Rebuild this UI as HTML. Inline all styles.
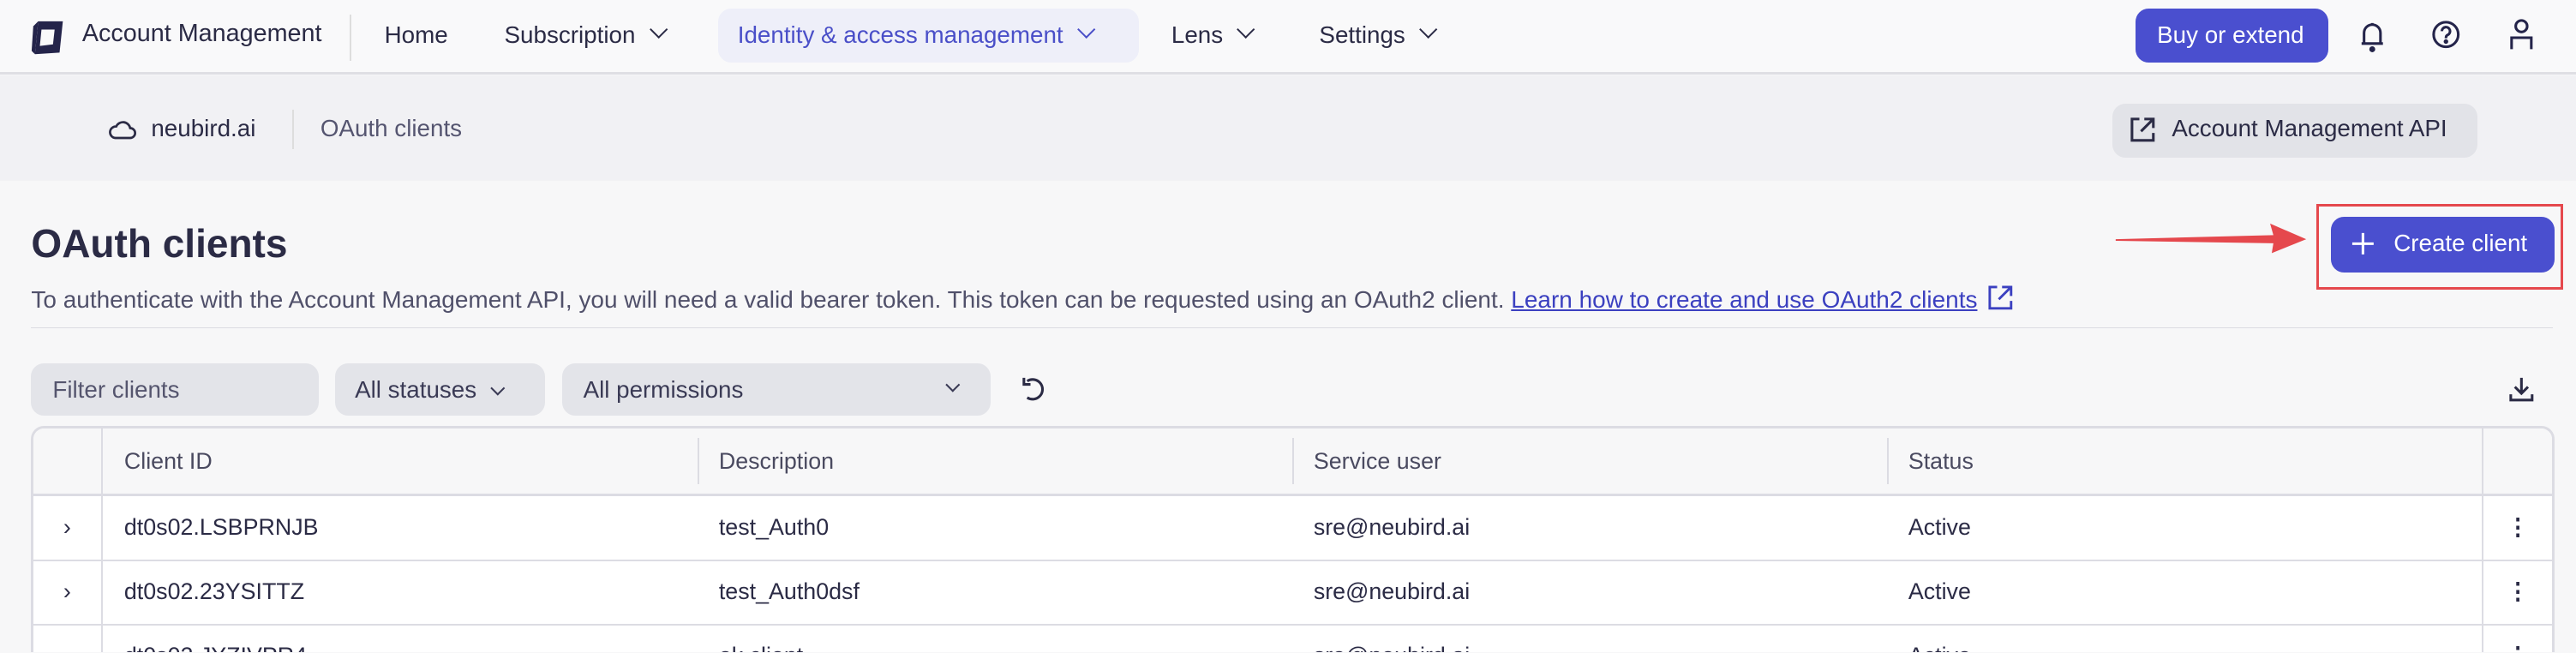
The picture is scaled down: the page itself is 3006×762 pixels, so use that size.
<!DOCTYPE html>
<html><head><meta charset="utf-8"><style>
html,body{margin:0;padding:0;width:3006px;height:762px;overflow:hidden;background:#f7f7f8}
#w{position:relative;width:1568px;height:397px;overflow:hidden;zoom:1.91709;font-family:"Liberation Sans",sans-serif;color:#2b2b45;font-size:14px}
.a{position:absolute;white-space:nowrap}
.nav{position:absolute;left:0;top:0;width:1568px;height:44px;background:#f9f9fa;border-bottom:2px solid #dfdfe4}
.bc{position:absolute;left:0;top:46px;width:1568px;height:64px;background:#f1f1f4}
.pill{position:absolute;border-radius:8px}
.ch{display:inline-block;width:7px;height:7px;border-right:1.5px solid currentColor;border-bottom:1.5px solid currentColor;transform:rotate(45deg);margin-left:10px;position:relative;top:-4px}
.th{position:absolute;top:0;height:40px;line-height:40px;color:#4a4a60}
.td{position:absolute;line-height:39px}
</style></head><body><div id="w">
<div class="nav"></div>
<svg class="a" style="left:18px;top:12px" width="21" height="22" viewBox="0 0 21 22"><path d="M5 1 L20 1 L18 20 L3 21 Z" fill="#24244a"/><path d="M7 6 L15 6 L14 15 L6 16 Z" fill="#f9f9fa"/><path d="M5 1 L2 4 L1 19 L3 21 Z" fill="#24244a"/></svg>
<div class="a" style="left:50px;top:12px;font-size:15px">Account Management</div>
<div class="a" style="left:213px;top:9px;width:1px;height:28px;background:#ddd"></div>
<div class="a" style="left:234px;top:13px;font-size:14.5px">Home</div>
<div class="a" style="left:307px;top:13px;font-size:14.5px">Subscription<span class="ch"></span></div>
<div class="pill" style="left:437px;top:5px;width:256px;height:33px;background:#eeeff9"></div>
<div class="a" style="left:449px;top:13px;font-size:14.5px;color:#4a4fc8">Identity &amp; access management<span class="ch"></span></div>
<div class="a" style="left:713px;top:13px;font-size:14.5px">Lens<span class="ch"></span></div>
<div class="a" style="left:803px;top:13px;font-size:14.5px">Settings<span class="ch"></span></div>
<div class="pill" style="left:1300px;top:5px;width:117px;height:33px;background:#4a4fcf"></div>
<div class="a" style="left:1313px;top:13px;font-size:14.5px;color:#fff">Buy or extend</div>
<svg class="a" style="left:1435px;top:12px" width="18" height="20" viewBox="0 0 18 20" fill="none" stroke="#24244a" stroke-width="1.6"><path d="M4 14 V8 a5 5 0 0 1 10 0 V14 M2.5 14.5 H15.5 M9 2 V3.5"/><circle cx="9" cy="18" r="1" fill="#24244a"/></svg>
<svg class="a" style="left:1480px;top:12px" width="18" height="18" viewBox="0 0 18 18" fill="none" stroke="#24244a" stroke-width="1.6"><circle cx="9" cy="9" r="7.5"/><path d="M6.5 7 a2.5 2.5 0 1 1 3.5 2.3 c-1 .4-1 1.2-1 2"/><circle cx="9" cy="13.3" r=".6" fill="#24244a"/></svg>
<svg class="a" style="left:1527px;top:11px" width="16" height="20" viewBox="0 0 16 20" fill="none" stroke="#24244a" stroke-width="1.6"><circle cx="8" cy="5" r="3.5"/><path d="M2 19 V12 H14 V19"/></svg>
<div class="bc"></div>
<svg class="a" style="left:66px;top:72px" width="17" height="13" viewBox="0 0 17 13" fill="none" stroke="#2b2b45" stroke-width="1.4"><path d="M4 12 H13 a3 3 0 0 0 0-6 a4.5 4.5 0 0 0-8.5-1 A3.5 3.5 0 0 0 4 12Z"/></svg>
<div class="a" style="left:92px;top:70px;font-size:14.5px">neubird.ai</div>
<div class="a" style="left:178px;top:67px;width:1px;height:24px;background:#ddd"></div>
<div class="a" style="left:195px;top:70px;font-size:14.5px;color:#555570">OAuth clients</div>
<div class="pill" style="left:1286px;top:63px;width:222px;height:33px;background:#e2e3e8"></div>
<svg class="a" style="left:1296px;top:71px" width="16" height="16" viewBox="0 0 16 16" fill="none" stroke="#2b2b45" stroke-width="1.6"><path d="M6 1.5 H1.5 V14.5 H14.5 V10 M9 1.5 H14.5 V7 M14.5 1.5 L7 9"/></svg>
<div class="a" style="left:1322px;top:70px;font-size:14.5px">Account Management API</div>
<div class="a" style="left:19px;top:134px;font-size:24px;font-weight:bold">OAuth clients</div>
<div class="a" style="left:19px;top:173px;font-size:14.6px;color:#50506a">To authenticate with the Account Management API, you will need a valid bearer token. This token can be requested using an OAuth2 client. <span style="color:#3b40c0;text-decoration:underline">Learn how to create and use OAuth2 clients</span> <svg width="16" height="16" viewBox="0 0 16 16" fill="none" stroke="#3b40c0" stroke-width="1.5" style="vertical-align:-2px;margin-left:2px"><path d="M6 1.5 H1.5 V14.5 H14.5 V10 M9 1.5 H14.5 V7 M14.5 1.5 L7 9"/></svg></div>
<div class="a" style="left:19px;top:199px;width:1535px;height:1px;background:#dcdce2"></div>
<svg class="a" style="left:1286px;top:135px" width="120" height="22" viewBox="0 0 120 22"><path d="M2 10.5 L98 8 L96 1 L118 10.5 L97 19 L98 13 L2 11.5Z" fill="#e5484d"/></svg>
<div class="a" style="left:1410px;top:124px;width:147px;height:49px;border:2px solid #e5484d"></div>
<div class="pill" style="left:1419px;top:132px;width:136px;height:34px;background:#4a4fcf"></div>
<svg class="a" style="left:1431px;top:141px" width="15" height="15" viewBox="0 0 15 15" stroke="#fff" stroke-width="1.6"><path d="M7.5 1 V14 M1 7.5 H14"/></svg>
<div class="a" style="left:1457px;top:140px;font-size:14.5px;color:#fff">Create client</div>
<div class="pill" style="left:19px;top:221px;width:175px;height:32px;background:#e3e4e9"></div>
<div class="a" style="left:32px;top:229px;font-size:14.5px;color:#55556e">Filter clients</div>
<div class="pill" style="left:204px;top:221px;width:128px;height:32px;background:#e3e4e9"></div>
<div class="a" style="left:216px;top:229px;font-size:14.5px;color:#3a3a55">All statuses<span class="ch" style="width:5px;height:5px;top:-3px"></span></div>
<div class="pill" style="left:342px;top:221px;width:261px;height:32px;background:#e3e4e9"></div>
<div class="a" style="left:355px;top:229px;font-size:14.5px;color:#3a3a55">All permissions</div>
<div class="a" style="left:577px;top:231px;width:5px;height:5px;border-right:1.5px solid #3a3a55;border-bottom:1.5px solid #3a3a55;transform:rotate(45deg)"></div>
<svg class="a" style="left:621px;top:229px" width="16" height="16" viewBox="0 0 16 16" fill="none" stroke="#2b2b45" stroke-width="1.6"><path d="M4 3 A6 6 0 1 1 4 13 M2 1 V5 H6"/></svg>
<svg class="a" style="left:1527px;top:229px" width="16" height="16" viewBox="0 0 16 16" fill="none" stroke="#2b2b45" stroke-width="1.6"><path d="M8 1 V10 M4 6.5 L8 10.5 L12 6.5 M1.5 11 V14.5 H14.5 V11"/></svg>
<div class="a" style="left:19px;top:259px;width:1533px;height:140px;border:2px solid #dcdce3;border-bottom:none;border-radius:8px 8px 0 0;background:#fff;overflow:hidden">
 <div style="position:absolute;left:0;top:0;width:100%;height:40px;background:#f7f7f8;border-bottom:2px solid #dcdce3"></div>
 <div style="position:absolute;left:0;top:80px;width:100%;height:1px;background:#dcdce3"></div>
 <div style="position:absolute;left:0;top:119px;width:100%;height:1px;background:#dcdce3"></div>
 <div style="position:absolute;left:41px;top:0;width:1px;height:200px;background:#dcdce3"></div>
 <div style="position:absolute;left:1490px;top:0;width:1px;height:200px;background:#dcdce3"></div>
 <div style="position:absolute;left:404px;top:6px;width:1px;height:28px;background:#dcdce3"></div>
 <div style="position:absolute;left:766px;top:6px;width:1px;height:28px;background:#dcdce3"></div>
 <div style="position:absolute;left:1128px;top:6px;width:1px;height:28px;background:#dcdce3"></div>
 <div class="th" style="left:55px">Client ID</div>
 <div class="th" style="left:417px">Description</div>
 <div class="th" style="left:779px">Service user</div>
 <div class="th" style="left:1141px">Status</div>
 <div class="td" style="left:18px;top:41px">›</div><div class="td" style="left:55px;top:41px">dt0s02.LSBPRNJB</div><div class="td" style="left:417px;top:41px">test_Auth0</div><div class="td" style="left:779px;top:41px">sre@neubird.ai</div><div class="td" style="left:1141px;top:41px">Active</div><div class="td" style="left:1505px;top:41px;font-weight:bold">⋮</div>
 <div class="td" style="left:18px;top:80px">›</div><div class="td" style="left:55px;top:80px">dt0s02.23YSITTZ</div><div class="td" style="left:417px;top:80px">test_Auth0dsf</div><div class="td" style="left:779px;top:80px">sre@neubird.ai</div><div class="td" style="left:1141px;top:80px">Active</div><div class="td" style="left:1505px;top:80px;font-weight:bold">⋮</div>
 <div class="td" style="left:18px;top:119px">›</div><div class="td" style="left:55px;top:119px">dt0s02.JYZIVPR4</div><div class="td" style="left:417px;top:119px">ok client</div><div class="td" style="left:779px;top:119px">sre@neubird.ai</div><div class="td" style="left:1141px;top:119px">Active</div><div class="td" style="left:1505px;top:119px;font-weight:bold">⋮</div>
</div>
</div></body></html>
